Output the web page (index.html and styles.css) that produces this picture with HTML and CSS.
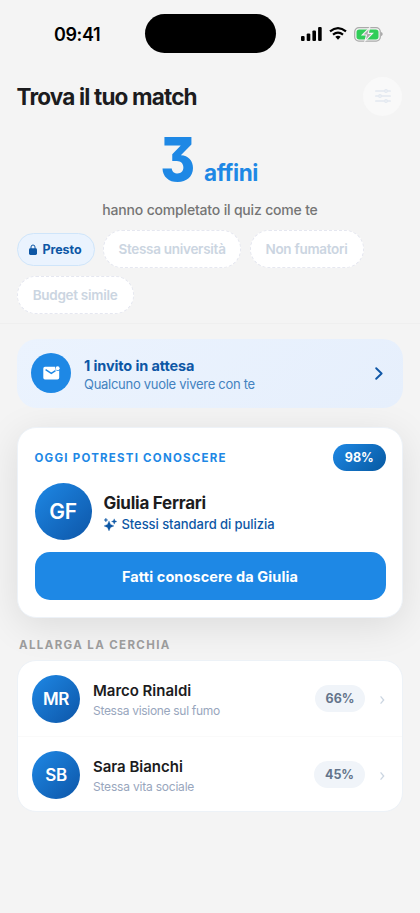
FILE: index.html
```html
<!DOCTYPE html>
<html lang="it">
<head>
<meta charset="utf-8">
<meta name="viewport" content="width=device-width, initial-scale=1">
<title>Trova il tuo match</title>
<link rel="stylesheet" href="styles.css">
</head>
<body>
<div class="status">
  <span class="time">09:41</span>
  <div class="island"></div>
  <div class="indicators">
    <svg class="signal" width="21" height="14" viewBox="0 0 21 14"><rect x="0" y="9" width="3.6" height="5" rx="1.1"/><rect x="5.7" y="6.5" width="3.6" height="7.5" rx="1.1"/><rect x="11.4" y="3.5" width="3.6" height="10.5" rx="1.1"/><rect x="17.1" y="0" width="3.6" height="14" rx="1.1"/></svg>
    <svg class="wifi" width="18" height="13" viewBox="0 0 18 13"><g fill="none" stroke="#000" stroke-width="2.2"><path d="M1 4.4Q9-2.1 17 4.4"/><path d="M4 7.7Q9 3.7 14 7.7"/></g><path d="M6.3 9.8Q9 7.8 11.7 9.8L9 12.7Z"/></svg>
    <svg class="battery" width="29" height="15" viewBox="0 0 29 15"><rect x=".7" y=".7" width="25.6" height="13.4" rx="4.2" fill="none" stroke="#aaa" stroke-width="1.2"/><rect x="2.5" y="2.4" width="22" height="10" rx="2.7" fill="#30cd58"/><path d="M27.2 5v4.2q1.4-.6 1.4-2.1T27.2 5Z" fill="#999"/><path d="M15.7.6 8.2 8h4.3l-1.6 6.2 7.7-7.8h-4.4Z" fill="#aaa" stroke="#f4f4f4" stroke-width="1.1"/></svg>
  </div>
</div>

<header class="header">
  <h1>Trova il tuo match</h1>
  <button class="filter" aria-label="Filtri"><svg width="16" height="14" viewBox="0 0 16 14"><g fill="none" stroke="#e2e8f0" stroke-width="1.7" stroke-linecap="round"><path d="M.9 2h14.2M.9 7h14.2M.9 12h14.2"/><g fill="#f0f2f5" stroke-width="1.1"><circle cx="11" cy="2" r="1.4"/><circle cx="5" cy="7" r="1.4"/><circle cx="11" cy="12" r="1.4"/></g></g></svg></button>
</header>

<section class="summary">
  <div class="count"><strong>3</strong><span>affini</span></div>
  <p>hanno completato il quiz come te</p>
</section>

<div class="chips">
  <div class="chip active"><svg width="8" height="11" viewBox="0 0 8 11"><path d="M2 5V3a2 2 0 0 1 4 0v2" fill="none" stroke="#0d57a5"/><rect y="4.2" width="8" height="6.8" rx="1.4" fill="#0d57a5"/></svg><span>Presto</span></div>
  <div class="chip uni"><span>Stessa università</span></div>
  <div class="chip smoke"><span>Non fumatori</span></div>
  <div class="chip budget"><span>Budget simile</span></div>
</div>

<main>
  <section class="invite">
    <div class="invite-icon"><svg width="17" height="14" viewBox="0 0 17 14"><path d="M2 .8h10.2a3 3 0 0 0 4 3.8v7.2a1.8 1.8 0 0 1-1.8 1.8H2A1.8 1.8 0 0 1 .3 11.8V2.5A1.7 1.7 0 0 1 2 .8Z" fill="#fff"/><path d="m2.6 3.7 5.7 3.7 4.2-2.7" fill="none" stroke="#1e88e5" stroke-width="1.4"/><circle cx="14.6" cy="2.3" r="2" fill="#fff"/></svg></div>
    <div class="invite-copy"><strong>1 invito in attesa</strong><span>Qualcuno vuole vivere con te</span></div>
    <svg class="arrow" width="8" height="13" viewBox="0 0 8 13"><path d="m1.2 1.2 5.4 5.3-5.4 5.3" fill="none" stroke="#1057a6" stroke-width="1.9" stroke-linecap="round" stroke-linejoin="round"/></svg>
  </section>

  <section class="card">
    <div class="card-top"><h2>OGGI POTRESTI CONOSCERE</h2><span class="score">98%</span></div>
    <div class="person">
      <div class="avatar large">GF</div>
      <div class="person-copy"><strong>Giulia Ferrari</strong><div class="reason"><svg width="13" height="13" viewBox="0 0 13 13" fill="#0d57a5"><path d="m5 2.9 1.500 3.500L10 7.900 6.500 9.400 5 12.900 3.500 9.400 0 7.900l3.500-1.500ZM10.200.8l.8 1.900 1.900.8-1.900.8-.8 1.900-.8-1.900-1.900-.8 1.900-.8ZM1.900 0l.6 1.400 1.400.6-1.400.6L1.900 4l-.6-1.400L0 2l1.300-.6Z" stroke="#0d57a5" stroke-width=".3"/></svg><span>Stessi standard di pulizia</span></div></div>
    </div>
    <button class="cta"><span>Fatti conoscere da Giulia</span></button>
  </section>

  <h3>ALLARGA LA CERCHIA</h3>
  <section class="list">
    <article class="row"><div class="avatar">MR</div><div class="row-copy"><strong>Marco Rinaldi</strong><span>Stessa visione sul fumo</span></div><span class="percent">66%</span><svg class="mini" width="5" height="8" viewBox="0 0 5 8"><path d="m1 .8 2.7 3.2L1 7.2"/></svg></article>
    <article class="row"><div class="avatar">SB</div><div class="row-copy"><strong>Sara Bianchi</strong><span class="note-wide">Stessa vita sociale</span></div><span class="percent wide">45%</span><svg class="mini" width="5" height="8" viewBox="0 0 5 8"><path d="m1 .8 2.7 3.2L1 7.2"/></svg></article>
  </section>
</main>
</body>
</html>
```
FILE: styles.css
```css
* { box-sizing: border-box; }
body { margin: 0; width: 420px; height: 913px; overflow: hidden; background: #f4f4f4; color: #1c1c1e; font-family: Inter, sans-serif; font-feature-settings: "cv09"; white-space: nowrap; }
h1, h2, h3, p { margin: 0; }
button { border: 0; padding: 0; font: inherit; }
svg { display: block; flex: none; }
.status { display: grid; grid-template-columns: 144.5px 131px 1fr; height: 76px; padding-top: 14px; }
.time { padding: 10px 0 0 54px; font-size: 18px; line-height: 22px; font-weight: 600; letter-spacing: -.4px; color: #000; }
.island { height: 39px; border-radius: 20px; background: #000; }
.indicators { display: flex; align-items: center; height: 39px; padding-left: 25.5px; }
.wifi { margin-left: 7px; }
.battery { margin: 1px 0 0 7px; }
.header { display: flex; align-items: center; justify-content: space-between; height: 40px; padding: 0 18px 0 16.5px; }
h1 { padding-top: 2px; font-size: 22.5px; line-height: 30px; font-weight: 700; letter-spacing: -.83px; }
.filter { display: grid; place-items: center; width: 39px; height: 39px; border-radius: 50%; background: #f9f9f9; }
.summary { height: 114px; text-align: center; color: #1e88e5; }
.count { display: flex; align-items: baseline; justify-content: center; gap: 10px; height: 85px; padding-top: 6px; line-height: 74px; }
.count strong { width: 32px; font-size: 61px; font-weight: 800; text-indent: -2px; transform: scaleX(.87); transform-origin: left; }
.count span { font-size: 22.5px; font-weight: 700; letter-spacing: -.4px; }
.summary p { font-size: 14px; line-height: 17px; color: #757575; font-weight: 500; letter-spacing: -.18px; }
.chips { display: flex; flex-wrap: wrap; align-items: center; gap: 8px 8.5px; height: 94px; padding: 0 17px 12px 16.5px; border-bottom: 1px solid #efefef; }
.chip { display: flex; align-items: center; justify-content: center; height: 38px; border: 1.5px dashed #e5e7f0; border-radius: 19px; background: #fff; color: #cbd5e1; font-size: 13.5px; font-weight: 600; letter-spacing: -.28px; }
.chip.active { width: 78px; height: 33px; gap: 5px; border: 1px solid #cfe5fa; background: #eaf3fe; color: #0d57a5; font-size: 12.5px; font-weight: 700; letter-spacing: -.05px; }
.uni { width: 138px; }
.smoke { width: 114px; }
.budget { width: 117px; }
main { padding: 15px 17px 0; }
.invite { display: flex; align-items: center; height: 69px; padding: 0 20px 1px 14px; border-radius: 20px; background: linear-gradient(135deg, #ebf3fe, #e6effc); }
.invite-icon { display: grid; place-items: center; width: 40px; height: 40px; border-radius: 50%; background: #1e88e5; }
.invite-copy { display: flex; flex: 1; flex-direction: column; margin-left: 13px; padding-top: 3px; color: #0d57a5; }
.invite-copy strong { font-size: 14.5px; line-height: 19px; font-weight: 700; letter-spacing: -.12px; }
.invite-copy span { font-size: 13px; line-height: 19px; color: #4382bf; letter-spacing: -.28px; }
.card { position: relative; height: 191px; margin-top: 19px; padding: 16px 16.5px; border: 1px solid #edf2f8; border-radius: 19px; background: #fff; box-shadow: 0 8px 38px rgba(0, 0, 0, .1); z-index: -1; }
.card-top { display: flex; justify-content: space-between; align-items: center; height: 27px; }
h2 { color: #1e88e5; font-size: 11.5px; font-weight: 700; letter-spacing: 1.23px; }
.score { display: grid; place-items: center; width: 52.5px; height: 27px; border-radius: 14px; background: linear-gradient(135deg, #1e88e5, #0759a1); color: #fff; font-size: 12.5px; font-weight: 700; }
.person { display: flex; align-items: center; margin-top: 12px; height: 57px; }
.avatar { display: grid; place-items: center; flex: none; width: 48px; height: 48px; border-radius: 50%; background: linear-gradient(135deg, #1e88e5, #0d56a8); color: #fff; font-size: 17px; font-weight: 600; letter-spacing: -.3px; }
.avatar.large { width: 57px; height: 57px; font-size: 21px; }
.person-copy { margin-left: 12px; padding-top: 3px; }
.person-copy strong { display: block; font-size: 17px; line-height: 22px; font-weight: 700; letter-spacing: -.25px; }
.reason { display: flex; gap: 5px; align-items: center; color: #0d57a5; font-size: 13px; line-height: 20px; font-weight: 500; letter-spacing: -.06px; }
.cta { width: 100%; height: 48px; margin-top: 12px; border-radius: 15px; background: #1e88e5; color: #fff; font-size: 14.5px; font-weight: 700; letter-spacing: .1px; }
h3 { margin: 19px 0 7px 2px; height: 16px; line-height: 16px; color: #9c9c9c; font-size: 11.5px; font-weight: 700; letter-spacing: 1.37px; }
.list { height: 152px; border: 1px solid #edf2f7; border-radius: 19px; background: #fff; overflow: hidden; }
.row { display: flex; align-items: center; height: 75px; padding: 0 17px 0 14px; }
.row + .row { border-top: 1px solid #fafafa; height: 76px; }
.row-copy { display: flex; flex: 1; flex-direction: column; margin-left: 13px; padding-top: 4px; }
.row-copy strong { font-size: 15px; line-height: 20px; font-weight: 600; letter-spacing: -.02px; }
.row-copy span { font-size: 12px; line-height: 19px; color: #98a6bd; letter-spacing: -.3px; }
.row-copy .note-wide { letter-spacing: -.2px; }
.percent { display: grid; place-items: center; width: 50px; height: 27px; margin-right: 15px; border-radius: 14px; background: #f0f4f9; color: #64748b; font-size: 12.5px; font-weight: 700; }
.percent.wide { width: 51px; }
.mini { margin-top: 3px; fill: none; stroke: #cbd5e1; stroke-width: 1.3; stroke-linecap: round; }
```
